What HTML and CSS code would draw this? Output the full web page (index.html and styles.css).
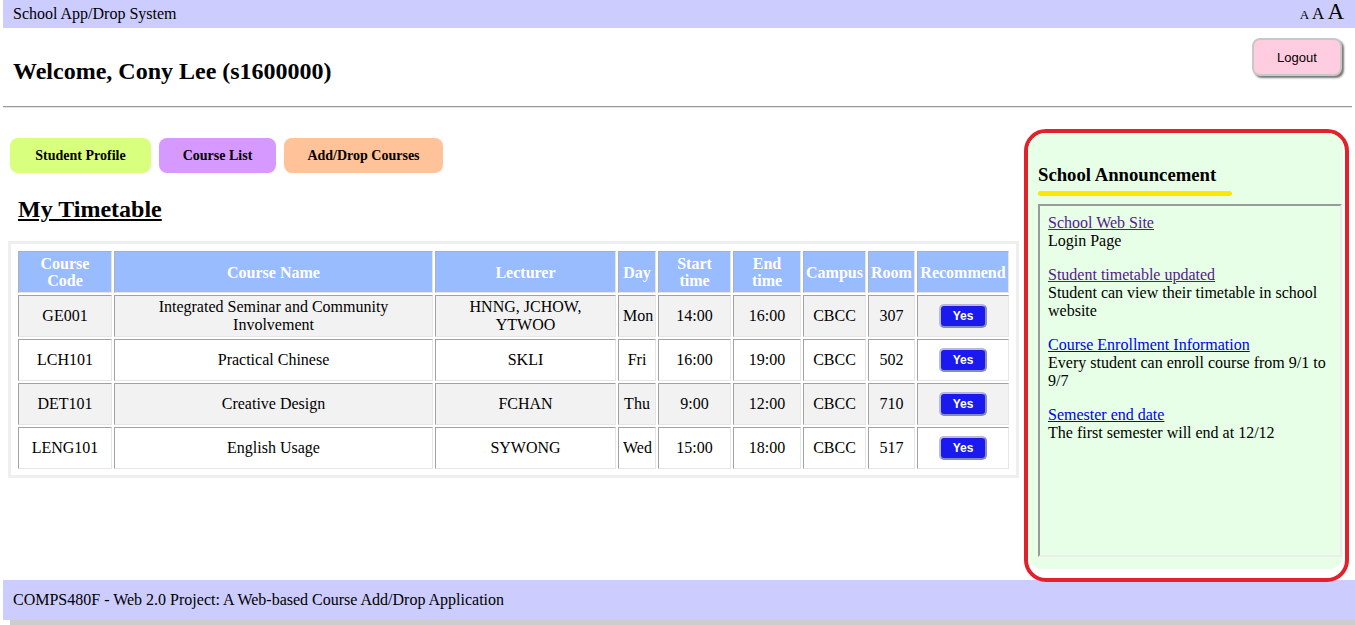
FILE: index.html
```html
<!DOCTYPE html>
<html lang="en">
<head>
<meta charset="utf-8">
<title>School App/Drop System</title>
<link rel="stylesheet" href="styles.css">
</head>
<body>
<div class="topbar">
  <span class="title">School App/Drop System</span>
  <span class="sizer"><span class="a-s">A</span><span class="a-m">A</span><span class="a-l">A</span></span>
</div>
<div class="header">
  <h1 class="welcome">Welcome, Cony Lee (s1600000)</h1>
  <button class="logout">Logout</button>
</div>
<hr class="rule">
<div class="main">
  <div class="content">
    <nav class="nav">
      <a class="navbtn profile">Student Profile</a>
      <a class="navbtn courses">Course List</a>
      <a class="navbtn adddrop">Add/Drop Courses</a>
    </nav>
    <h2 class="page-title">My Timetable</h2>
    <div class="table-wrap">
      <table class="timetable">
        <colgroup>
          <col class="c-code"><col class="c-name"><col class="c-lect"><col class="c-day"><col class="c-start"><col class="c-end"><col class="c-campus"><col class="c-room"><col class="c-rec">
        </colgroup>
        <thead>
          <tr><th>Course<br>Code</th><th>Course Name</th><th>Lecturer</th><th>Day</th><th>Start<br>time</th><th>End<br>time</th><th>Campus</th><th>Room</th><th>Recommend</th></tr>
        </thead>
        <tbody>
          <tr class="odd"><td>GE001</td><td>Integrated Seminar and Community Involvement</td><td>HNNG, JCHOW, YTWOO</td><td>Mon</td><td>14:00</td><td>16:00</td><td>CBCC</td><td>307</td><td><button class="yes">Yes</button></td></tr>
          <tr><td>LCH101</td><td>Practical Chinese</td><td>SKLI</td><td>Fri</td><td>16:00</td><td>19:00</td><td>CBCC</td><td>502</td><td><button class="yes">Yes</button></td></tr>
          <tr class="odd"><td>DET101</td><td>Creative Design</td><td>FCHAN</td><td>Thu</td><td>9:00</td><td>12:00</td><td>CBCC</td><td>710</td><td><button class="yes">Yes</button></td></tr>
          <tr><td>LENG101</td><td>English Usage</td><td>SYWONG</td><td>Wed</td><td>15:00</td><td>18:00</td><td>CBCC</td><td>517</td><td><button class="yes">Yes</button></td></tr>
        </tbody>
      </table>
    </div>
  </div>
  <aside class="frame">
    <div class="announce">
      <h3 class="ann-title">School Announcement</h3>
      <div class="ann-bar"></div>
      <div class="ann-box">
        <p class="item"><a class="visited" href="#">School Web Site</a><br>Login Page</p>
        <p class="item"><a class="visited" href="#">Student timetable updated</a><br>Student can view their timetable in school website</p>
        <p class="item"><a href="#">Course Enrollment Information</a><br>Every student can enroll course from 9/1 to 9/7</p>
        <p class="item"><a href="#">Semester end date</a><br>The first semester will end at 12/12</p>
      </div>
    </div>
  </aside>
</div>
<footer class="footer">COMPS480F - Web 2.0 Project: A Web-based Course Add/Drop Application</footer>
<div class="bottombar"></div>
</body>
</html>
```
FILE: styles.css
```css
html, body {
  margin: 0;
  padding: 0;
  background: #fff;
}
body {
  margin-left: 3px;
  font-family: "Liberation Serif", "Times New Roman", serif;
  color: #000;
  overflow: hidden;
  height: 625px;
}
.topbar {
  height: 28px;
  background: #ccccff;
  display: flex;
  justify-content: space-between;
  align-items: center;
  padding: 0 11px 0 10px;
}
.title {
  font-size: 16px;
}
.sizer {
  display: flex;
  align-items: baseline;
  gap: 3px;
  margin-top: -4px;
}
.a-s { font-size: 13px; }
.a-m { font-size: 17px; }
.a-l { font-size: 23px; }

.header {
  height: 78px;
  display: flex;
  justify-content: space-between;
  align-items: flex-start;
  padding: 0 13px 0 10px;
  box-sizing: border-box;
}
.welcome {
  margin: 30px 0 0 0;
  font-size: 24px;
  font-weight: bold;
}
.logout {
  margin-top: 10px;
  width: 90px;
  height: 38px;
  background: #ffcce0;
  border: 2px solid #c8c8c8;
  border-radius: 8px;
  box-shadow: 2px 2px 2px #7a7a7a;
  font-family: "Liberation Sans", Arial, sans-serif;
  font-size: 13px;
  color: #000;
}
.rule {
  margin: 0 3px 0 0;
  border: 0;
  border-top: 1px solid #9a9a9a;
  border-bottom: 1px solid #e4e4e4;
  height: 0;
}
.main {
  display: flex;
  gap: 5px;
  height: 472px;
}
.content {
  flex: 1;
  padding: 0 0 0 5px;
}
.nav {
  display: flex;
  gap: 8px;
  margin: 30px 0 0 2px;
}
.navbtn {
  height: 35px;
  display: flex;
  align-items: center;
  justify-content: center;
  border-radius: 8px;
  font-weight: bold;
  font-size: 14px;
  color: #000;
}
.profile { width: 141px; background: #d9ff7f; }
.courses { width: 117px; background: #d699ff; }
.adddrop { width: 159px; background: #ffc299; }

.page-title {
  margin: 22px 0 0 10px;
  font-size: 24px;
  font-weight: bold;
  text-decoration: underline;
  line-height: 28px;
}
.table-wrap {
  margin-top: 18px;
  border: 3px solid #efefef;
  padding: 5px 5px 4px 5px;
}
.timetable {
  width: 100%;
  table-layout: fixed;
  border-spacing: 2px;
  font-size: 16px;
}
.c-code { width: 94px; }
.c-name { width: 319px; }
.c-lect { width: 181px; }
.c-day { width: 38px; }
.c-start { width: 73px; }
.c-end { width: 68px; }
.c-campus { width: 63px; }
.c-room { width: 47px; }
.c-rec { width: 92px; }

.timetable th, .timetable td {
  border: 1px solid;
  border-color: #a2a2a2 #e6e6e6 #e6e6e6 #a2a2a2;
  text-align: center;
  vertical-align: middle;
  line-height: 18px;
}
.timetable th {
  height: 40px;
  padding: 0 1px;
  background: #99bbff;
  color: #fff;
  font-weight: bold;
  line-height: 17px;
  border-color: #b0b0b0 #e6e6e6 #e6e6e6 #b0b0b0;
}
.timetable td {
  height: 40px;
  padding: 0 4px;
  background: #fff;
}
.timetable tr.odd td {
  background: #f2f2f2;
}
.yes {
  width: 48px;
  height: 24px;
  background: #1a1aee;
  color: #fff;
  border: 2px solid #8a8ab8;
  border-top-color: #b8b8d8;
  border-left-color: #b8b8d8;
  border-radius: 5px;
  font-family: "Liberation Sans", Arial, sans-serif;
  font-weight: bold;
  font-size: 12px;
  padding: 0;
}

.frame {
  width: 326px;
  box-sizing: border-box;
  margin: 21px 6px 0 0;
  height: 453px;
  border: 4px solid #e3212a;
  border-radius: 22px;
  background: #fff;
  overflow: hidden;
}
.announce {
  background: #e6ffe6;
  height: 436px;
  box-sizing: border-box;
  margin-right: 2px;
  padding: 31px 1px 0 10px;
  border-radius: 0 0 14px 14px;
}
.ann-title {
  margin: 0;
  font-size: 18.72px;
  font-weight: bold;
  line-height: 22px;
}
.ann-bar {
  margin-top: 5px;
  width: 194px;
  height: 5px;
  border-radius: 3px;
  background: #fce800;
}
.ann-box {
  margin-top: 8px;
  height: 353px;
  box-sizing: border-box;
  border: 2px solid;
  border-color: #9a9a9a #ececec #ececec #9a9a9a;
  padding: 8px 8px;
  font-size: 16px;
  line-height: 18px;
}
.item {
  margin: 0 0 16px 0;
}
.item a {
  color: #0000ee;
}
.item a.visited {
  color: #551a8b;
}
.footer {
  height: 40px;
  background: #ccccff;
  display: flex;
  align-items: center;
  padding-left: 10px;
  font-size: 16px;
}
.bottombar {
  height: 5px;
  margin-left: 7px;
  background: #cdcdcd;
}
```
